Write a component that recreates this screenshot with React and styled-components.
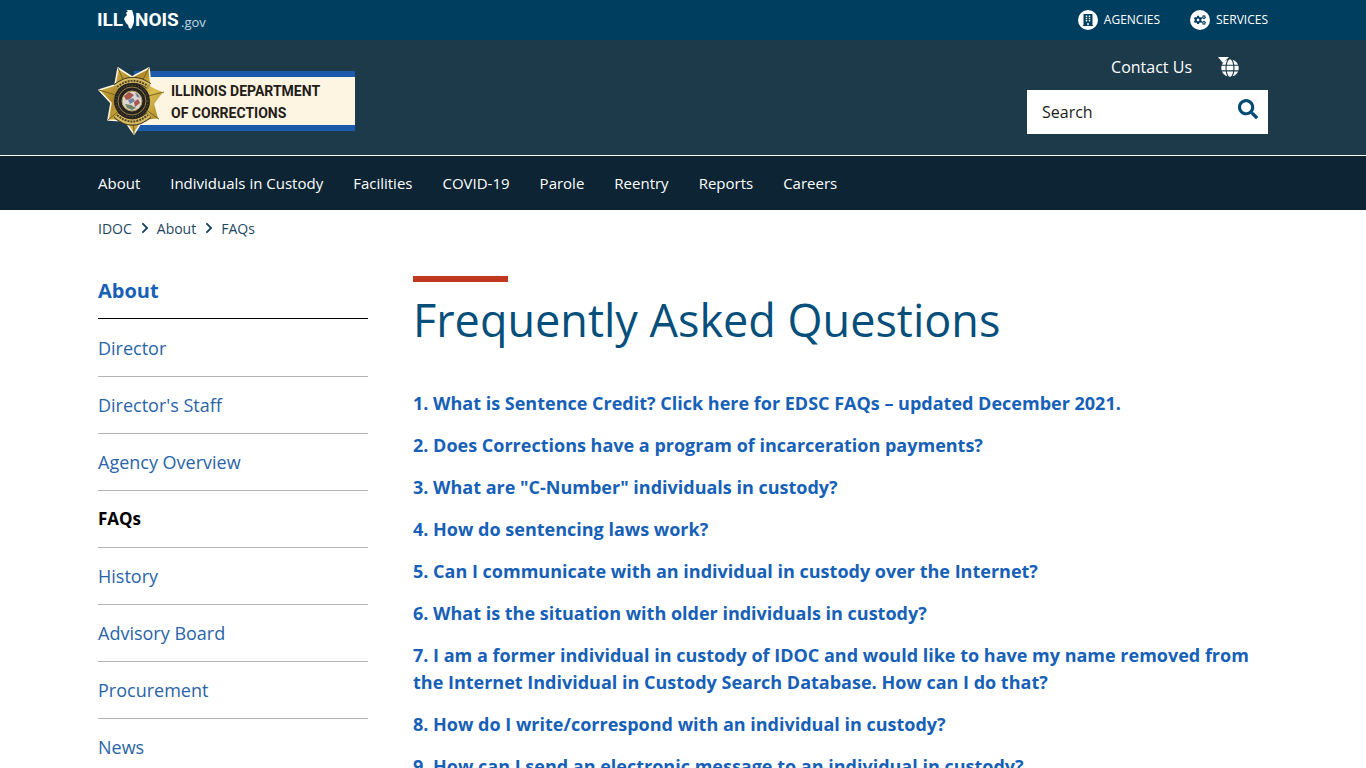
import React from 'react';
import styled, { createGlobalStyle } from 'styled-components';
import { FaBuilding, FaCogs, FaGlobe, FaSearch, FaChevronRight } from 'react-icons/fa';

const GlobalStyle = createGlobalStyle`
  *, *::before, *::after { box-sizing: border-box; }
  body {
    margin: 0;
    background: #fff;
    color: #000;
    font-family: "Segoe UI", "Open Sans", "Noto Sans", sans-serif;
    font-size: 16px;
  }
  a { text-decoration: none; }
  ul, ol { list-style: none; margin: 0; padding: 0; }
`;

const Container = styled.div`
  width: 100%;
  max-width: 1200px;
  margin: 0 auto;
  padding: 0 15px;
`;

const TopBar = styled.div`
  background: #003e60;
`;

const TopBarRow = styled(Container)`
  display: flex;
  align-items: center;
  justify-content: space-between;
  height: 40px;
`;

const StateLogo = styled.a`
  display: flex;
`;

const TopLinks = styled.div`
  display: flex;
  gap: 30px;
`;

const TopLink = styled.a`
  display: flex;
  align-items: center;
  gap: 6px;
  color: #fff;
  font-size: 12px;
  line-height: 20px;
`;

const RoundIcon = styled.span`
  display: flex;
  align-items: center;
  justify-content: center;
  width: 20px;
  height: 20px;
  border-radius: 50%;
  background: #fff;
  color: #003e60;
  font-size: 12px;
`;

const Masthead = styled.header`
  background: #1d3a4b;
  border-bottom: 1px solid #fff;
`;

const MastheadRow = styled(Container)`
  display: flex;
  justify-content: space-between;
  align-items: flex-start;
  height: 115px;
`;

const AgencyLogo = styled.a`
  display: block;
  padding-top: 25px;
  svg { display: block; }
`;

const Tools = styled.div`
  display: flex;
  flex-direction: column;
  padding-top: 15px;
`;

const ToolLinks = styled.div`
  display: flex;
  align-items: center;
  justify-content: flex-end;
  gap: 26px;
  height: 24px;
  margin-bottom: 11px;
  padding-right: 29px;
`;

const ContactLink = styled.a`
  color: #fff;
  font-size: 16px;
`;

const LanguageButton = styled.button`
  display: flex;
  padding: 0;
  border: 0;
  background: none;
  color: #fff;
`;

const SearchForm = styled.form`
  display: flex;
  align-items: center;
  width: 241px;
  height: 44px;
  background: #fff;
`;

const SearchInput = styled.input`
  flex: 1;
  min-width: 0;
  height: 44px;
  padding: 0 15px;
  border: 0;
  background: none;
  font: inherit;
  color: #1b1b1b;
  &::placeholder { color: #1b1b1b; opacity: 1; }
`;

const SearchButton = styled.button`
  display: flex;
  padding: 0 10px 6px;
  border: 0;
  background: none;
  color: #004b76;
  font-size: 20px;
`;

const NavBar = styled.nav`
  background: #0c2433;
`;

const NavList = styled.ul`
  display: flex;
  align-items: center;
  gap: 30px;
  height: 54px;
`;

const NavLink = styled.a`
  color: #fff;
  font-size: 15px;
  line-height: 24px;
`;

const Crumbs = styled.ol`
  display: flex;
  align-items: center;
  height: 36px;
  font-size: 14px;
`;

const Crumb = styled.li`
  display: flex;
  align-items: center;
  gap: 7px;
  margin-right: 6px;
  color: #1d4763;
  a { color: #1d4763; }
  svg { font-size: 12px; }
`;

const Columns = styled(Container)`
  display: flex;
  align-items: flex-start;
  gap: 45px;
  padding-top: 30px;
`;

const Sidebar = styled.nav`
  flex: 0 0 270px;
`;

const SideTitle = styled.h2`
  margin: 0 0 1px;
  height: 43px;
  border-bottom: 1px solid #000;
  font-size: 20px;
  line-height: 30px;
  a { color: #1660b7; }
`;

const SideItem = styled.li`
  border-bottom: 1px solid #b4b4b4;
`;

const SideLink = styled.a`
  display: block;
  padding: 14px 0;
  color: ${(p) => (p.$current ? '#000' : '#2a64a8')};
  font-size: ${(p) => (p.$current ? '17px' : '18px')};
  font-weight: ${(p) => (p.$current ? 700 : 400)};
  line-height: 28px;
`;

const Main = styled.main`
  flex: 1;
  min-width: 0;
`;

const Title = styled.h1`
  margin: 0 0 32px;
  color: #064f7b;
  font-size: 45px;
  font-weight: 400;
  line-height: 76px;
  &::before {
    content: "";
    display: block;
    width: 95px;
    height: 6px;
    background: #c23720;
  }
`;

const Question = styled.li`
  margin-bottom: 15px;
  font-size: 18px;
  font-weight: 700;
  line-height: 27px;
  a { color: #1660b7; }
`;

const NAV = ['About', 'Individuals in Custody', 'Facilities', 'COVID-19', 'Parole', 'Reentry', 'Reports', 'Careers'];

const SIDE = ['Director', "Director's Staff", 'Agency Overview', 'FAQs', 'History', 'Advisory Board', 'Procurement', 'News'];

const QUESTIONS = [
  '1. What is Sentence Credit? Click here for EDSC FAQs – updated December 2021.',
  '2. Does Corrections have a program of incarceration payments?',
  '3. What are "C-Number" individuals in custody?',
  '4. How do sentencing laws work?',
  '5. Can I communicate with an individual in custody over the Internet?',
  '6. What is the situation with older individuals in custody?',
  '7. I am a former individual in custody of IDOC and would like to have my name removed from the Internet Individual in Custody Search Database. How can I do that?',
  '8. How do I write/correspond with an individual in custody?',
  '9. How can I send an electronic message to an individual in custody?',
];

function IllinoisMark() {
  return (
    <svg width="110" height="32" viewBox="0 -4 110 32" overflow="visible" role="img" aria-label="Illinois.gov">
      <g fill="#fff" fontFamily="Roboto, sans-serif">
        <text x="-1" y="18" fontSize="19" fontWeight="700">ILL</text>
        <path d="M28 2h6l1 3 1 4v5l-1 3-2 4-2-1-1-3-2-2-2-4 1-2 2-2-1-2 2-2z" />
        <text x="37" y="18" fontSize="19" fontWeight="700">NOIS</text>
        <text x="83" y="19" fontSize="13" fontFamily='"Open Sans", sans-serif' fill="#c5d8e4">.gov</text>
      </g>
    </svg>
  );
}

function AgencyBanner() {
  return (
    <svg width="257" height="72" viewBox="0 0 257 72" role="img" aria-label="Illinois Department of Corrections">
      <defs>
        <linearGradient id="gold" x1="0" y1="0" x2="1" y2="1">
          <stop offset="0" stopColor="#e5cc62" />
          <stop offset="0.35" stopColor="#ad8526" />
          <stop offset="0.6" stopColor="#d9bd4e" />
          <stop offset="1" stopColor="#8f6b1c" />
        </linearGradient>
      </defs>
      <path fill="#1c5aab" d="M36 6h221v60H36z" />
      <path fill="#fdf4e2" d="M36 12h221v48H36z" />
      <path
        fill="url(#gold)"
        stroke="#fbf6df"
        strokeWidth="1.5"
        strokeLinejoin="round"
        d="M20 3L34 12 51 3 53 21 66 27 57 39 61 54 44 56 36 69 27 56 10 55 13 38 1 25 17 20z"
      />
      <path fill="none" stroke="#7e611d" d="M20 3L34 35 51 3M66 27L34 35 61 54M36 69L34 35 10 55M1 25L34 35" />
      <path fill="none" stroke="#453b20" strokeWidth="7" d="M18 22Q34 9 51 21M18 50Q34 64 51 50" />
      <path fill="none" stroke="#d8bc63" strokeWidth="5" d="M18 22Q34 9 51 21M18 50Q34 64 51 50" />
      <path fill="none" stroke="#54451f" strokeWidth="2" strokeDasharray="2 1" d="M19 22Q34 10 50 21M19 50Q34 63 50 50" />
      <circle cx="34" cy="36" r="18" fill="#25231f" />
      <circle cx="34" cy="36" r="14" fill="none" stroke="#9a8046" strokeWidth="1" />
      <circle cx="34" cy="36" r="16" fill="none" stroke="#6f654c" strokeWidth="1" strokeDasharray="1 2" />
      <circle cx="34" cy="36" r="10" fill="#ddd7d1" stroke="#b29b5c" />
      <path fill="#a8564c" d="M26 31l5-4 5 3-4 4-4 1zM36 37l4-3 2 4-5 4z" />
      <path fill="#7184a0" d="M30 35l5-2 2 3-5 3zM37 28l3 1 2 4-3-1z" />
      <path fill="#6f8364" d="M27 39l6 1 5 3-4 2-5-2z" />
      <g fill="#231c17" fontFamily="Roboto, sans-serif" fontSize="14" fontWeight="700">
        <text x="73" y="31">ILLINOIS DEPARTMENT</text>
        <text x="73" y="53">OF CORRECTIONS</text>
      </g>
    </svg>
  );
}

function LanguageIcon() {
  return (
    <svg width="21" height="20" viewBox="0 0 21 20" fill="currentColor" aria-hidden="true">
      <path d="M0 0h11L5 6z" />
      <svg x="3" y="2" width="18" height="18" viewBox="0 0 18 18">
        <FaGlobe size={18} />
      </svg>
    </svg>
  );
}

export default function App() {
  return (
    <>
      <GlobalStyle />
      <TopBar>
        <TopBarRow>
          <StateLogo href="#illinois"><IllinoisMark /></StateLogo>
          <TopLinks>
            <TopLink href="#agencies"><RoundIcon><FaBuilding /></RoundIcon>AGENCIES</TopLink>
            <TopLink href="#services"><RoundIcon><FaCogs /></RoundIcon>SERVICES</TopLink>
          </TopLinks>
        </TopBarRow>
      </TopBar>
      <Masthead>
        <MastheadRow>
          <AgencyLogo href="#home"><AgencyBanner /></AgencyLogo>
          <Tools>
            <ToolLinks>
              <ContactLink href="#contact">Contact Us</ContactLink>
              <LanguageButton type="button" aria-label="Translate"><LanguageIcon /></LanguageButton>
            </ToolLinks>
            <SearchForm role="search" onSubmit={(e) => e.preventDefault()}>
              <SearchInput type="text" placeholder="Search" aria-label="Search" />
              <SearchButton type="submit" aria-label="Submit search"><FaSearch /></SearchButton>
            </SearchForm>
          </Tools>
        </MastheadRow>
      </Masthead>
      <NavBar aria-label="Main">
        <Container>
          <NavList>
            {NAV.map((name) => (
              <li key={name}><NavLink href="#nav">{name}</NavLink></li>
            ))}
          </NavList>
        </Container>
      </NavBar>
      <Container>
        <nav aria-label="Breadcrumb">
          <Crumbs>
            <Crumb><a href="#idoc">IDOC</a><FaChevronRight /></Crumb>
            <Crumb><a href="#about">About</a><FaChevronRight /></Crumb>
            <Crumb><a href="#faqs">FAQs</a></Crumb>
          </Crumbs>
        </nav>
      </Container>
      <Columns>
        <Sidebar aria-label="About">
          <SideTitle><a href="#about">About</a></SideTitle>
          <ul>
            {SIDE.map((name) => (
              <SideItem key={name}>
                <SideLink href="#side" $current={name === 'FAQs'}>{name}</SideLink>
              </SideItem>
            ))}
          </ul>
        </Sidebar>
        <Main>
          <Title>Frequently Asked Questions</Title>
          <ol>
            {QUESTIONS.map((q) => (
              <Question key={q}><a href="#question">{q}</a></Question>
            ))}
          </ol>
        </Main>
      </Columns>
    </>
  );
}
